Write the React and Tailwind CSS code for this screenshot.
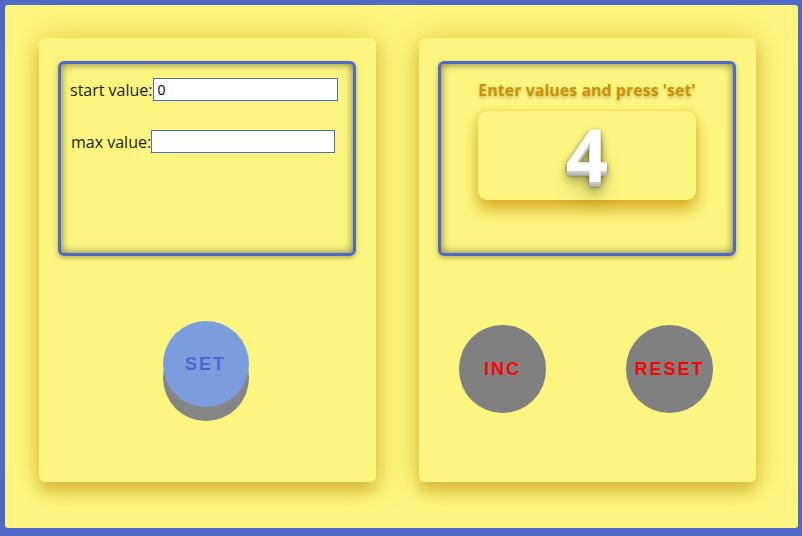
export default function App() {
  const digitShadow =
    "0 1px 0 #ccc, 0 2px 0 #c9c9c9, 0 3px 0 #bbb, 0 4px 0 #b9b9b9, 0 5px 0 #aaa, 0 6px 1px rgba(0,0,0,.1), 0 0 5px rgba(0,0,0,.1), 0 1px 3px rgba(0,0,0,.3), 0 3px 5px rgba(0,0,0,.2), 0 5px 10px rgba(0,0,0,.25), 0 10px 10px rgba(0,0,0,.2), 0 20px 20px rgba(0,0,0,.15)";
  return (
    <div className="w-[802px] h-[536px] bg-[#5068c8] pt-[5px] pl-[5px] overflow-hidden">
      <div className="w-[793px] h-[523px] bg-[#fcf680] rounded-[3px] flex pl-[34px] pt-[33px] gap-[43px] font-['Open_Sans',sans-serif]">
        {/* Left card */}
        <div className="w-[337px] h-[444px] rounded-[6px] bg-[#fcf680] shadow-[0_0_30px_rgba(215,165,20,0.55),0_10px_14px_rgba(185,140,20,0.45)] flex flex-col pt-[23px] px-[19px]">
          <div className="w-[298px] h-[195px] shrink-0 border-[3px] border-[#5068c8] rounded-[6px] shadow-[inset_0_0_8px_rgba(0,0,0,0.55),0_2px_5px_rgba(120,100,40,0.5)] pt-[14px] pl-[9px] flex flex-col gap-[29px]">
            <div className="flex items-center h-[23px]">
              <span className="text-[16px] text-[#222] leading-none">start value:</span>
              <input
                defaultValue="0"
                className="w-[185px] h-[23px] bg-white border border-[#5068c8] outline-none px-[4px] text-[14px] text-black font-['Open_Sans',sans-serif]"
              />
            </div>
            <div className="flex items-center h-[23px] pl-[1px]">
              <span className="text-[16px] text-[#222] leading-none">max value:</span>
              <input
                className="w-[184px] h-[23px] bg-white border border-[#5068c8] outline-none px-[4px] text-[14px] text-black"
              />
            </div>
          </div>
          <div className="flex-1 flex items-center justify-center pt-[2px] pr-[4px]">
            <button className="w-[86px] h-[86px] rounded-full bg-[#7c9ddd] shadow-[0_14px_0_#858585] text-[#4d66cb] text-[18px] font-bold tracking-[2px] font-['Liberation_Sans',sans-serif] mt-[-12px]">
              SET
            </button>
          </div>
        </div>
        {/* Right card */}
        <div className="w-[337px] h-[444px] rounded-[6px] bg-[#fcf680] shadow-[0_0_30px_rgba(215,165,20,0.55),0_10px_14px_rgba(185,140,20,0.45)] flex flex-col pt-[23px] px-[19px]">
          <div className="w-[298px] h-[195px] shrink-0 border-[3px] border-[#5068c8] rounded-[6px] shadow-[inset_0_0_8px_rgba(0,0,0,0.55),0_2px_5px_rgba(120,100,40,0.5)] flex flex-col items-center pt-[15px]">
            <div className="text-[16px] font-bold text-[#c7930c] leading-[22px] [text-shadow:0_2px_3px_rgba(120,80,0,0.35)]">
              Enter values and press 'set'
            </div>
            <div className="mt-[10px] w-[218px] h-[89px] rounded-[9px] bg-[#fcf680] shadow-[0_10px_16px_rgba(205,150,10,0.75),0_0_6px_rgba(205,160,20,0.35)] flex items-center justify-center">
              <span
                className="text-[74px] font-bold text-white leading-none mt-[-4px]"
                style={{ textShadow: digitShadow }}
              >
                4
              </span>
            </div>
          </div>
          <div className="flex-1 flex items-center pl-[21px] gap-[80px]">
            <button className="w-[87px] h-[88px] rounded-full bg-[#808080] text-[#ff0000] text-[18px] font-bold tracking-[2px] font-['Liberation_Sans',sans-serif]">
              INC
            </button>
            <button className="w-[87px] h-[88px] rounded-full bg-[#808080] text-[#ff0000] text-[18px] font-bold tracking-[2px] font-['Liberation_Sans',sans-serif]">
              RESET
            </button>
          </div>
        </div>
      </div>
    </div>
  );
}
